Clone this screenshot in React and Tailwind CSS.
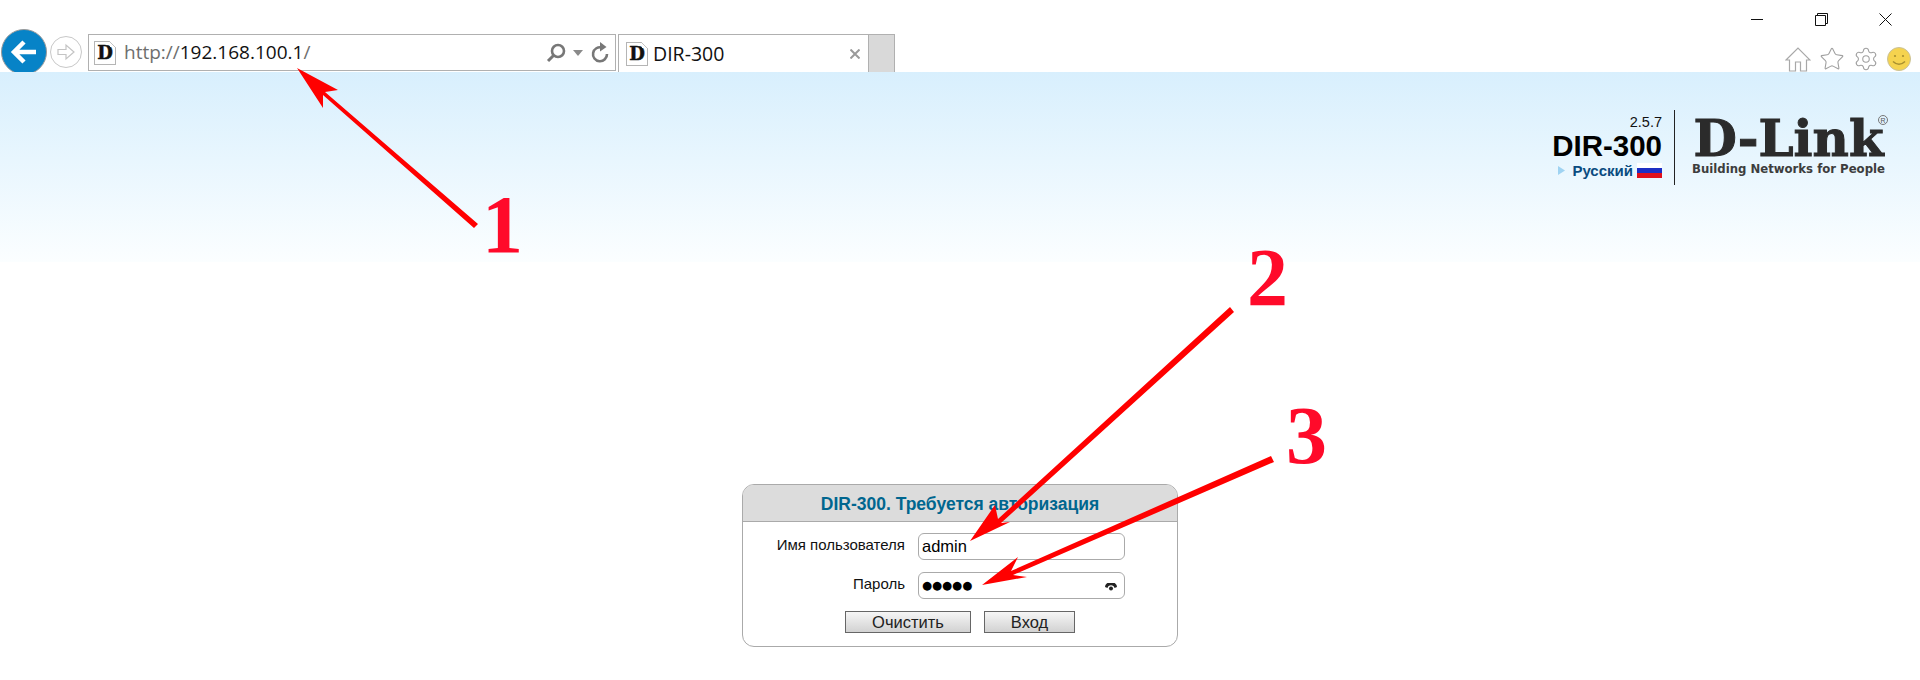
import React from 'react';
import { Settings, Star } from 'lucide-react';

// Small document favicon with the D-Link "D" on it
const Favicon = () => (
    <div className="relative flex h-[24px] w-[22px] shrink-0 items-center justify-center border border-[#b5b5b5] bg-white">
        <span className="font-['DejaVu_Serif'] text-[18px] font-bold leading-none text-[#111] [-webkit-text-stroke:0.5px_#111]">D</span>
        <div className="absolute -right-px -top-px h-[6px] w-[6px] bg-white" />
        <svg className="absolute -right-px -top-px" width="7" height="7" viewBox="0 0 7 7">
            <path d="M0.5 0.5 L6.5 6.5" stroke="#c4c4c4" fill="none" />
        </svg>
    </div>
);

const BackButton = () => (
    <div className="flex h-[46px] w-[46px] items-center justify-center rounded-full border border-[#9a9a9a] bg-[#0783c7]">
        <svg width="28" height="26" viewBox="0 0 28 26">
            <path d="M26 13 H5 M14 3 L4 13 L14 23" stroke="#fff" strokeWidth="4.5" fill="none" />
        </svg>
    </div>
);

const ForwardButton = () => (
    <div className="flex h-[32px] w-[32px] items-center justify-center rounded-full border border-[#c8c8c8] bg-white">
        <svg width="20" height="18" viewBox="0 0 20 18">
            <path d="M2 6.5 H10 V2 L18 9 L10 16 V11.5 H2 Z" stroke="#c4c4c4" strokeWidth="1.2" fill="none" />
        </svg>
    </div>
);

const AddressBar = () => (
    <div className="flex h-[37px] w-[528px] items-center border border-[#b0b0b0] bg-white pl-[5px] pr-[6px]">
        <Favicon />
        <div className="ml-[8px] flex-1 font-['Open_Sans'] text-[19px] leading-none text-[#111]">
            <span className="text-[#6e6e6e]">http://</span>192.168.100.1<span className="text-[#6e6e6e]">/</span>
        </div>
        <svg width="20" height="20" viewBox="0 0 20 20">
            <circle cx="12" cy="8" r="6" stroke="#777" strokeWidth="2.6" fill="none" />
            <path d="M7.5 12.5 L2 18" stroke="#777" strokeWidth="3" />
        </svg>
        <svg className="ml-[7px]" width="10" height="6" viewBox="0 0 10 6">
            <path d="M0 0 H10 L5 6 Z" fill="#8a8a8a" />
        </svg>
        <svg className="ml-[8px]" width="18" height="22" viewBox="0 0 18 22">
            <path d="M11 5.5 A7 7 0 1 0 16 12" stroke="#777" strokeWidth="2.6" fill="none" />
            <path d="M9 0 L15.5 5 L9 9.5 Z" fill="#777" />
        </svg>
    </div>
);

const Tab = () => (
    <div className="ml-[2px] flex h-[38px] border border-b-0 border-[#b0b0b0]">
        <div className="flex w-[249px] items-center bg-white pl-[7px] pr-[8px]">
            <Favicon />
            <span className="ml-[5px] flex-1 font-['Open_Sans'] text-[19.5px] leading-none text-[#111]">DIR-300</span>
            <svg width="10" height="10" viewBox="0 0 10 10">
                <path d="M0.5 0.5 L9.5 9.5 M9.5 0.5 L0.5 9.5" stroke="#9a9a9a" strokeWidth="2" />
            </svg>
        </div>
        <div className="w-[26px] border-l border-[#b0b0b0] bg-[#d9d9d9]" />
    </div>
);

const WindowControls = () => (
    <div className="flex items-center justify-end gap-[51px] pr-[28px]">
        <svg width="13" height="13" viewBox="0 0 13 13">
            <path d="M0 6.5 H12" stroke="#111" />
        </svg>
        <svg width="13" height="13" viewBox="0 0 13 13">
            <path d="M2.5 2.5 V0.5 H12.5 V10.5 H10.5 M0.5 2.5 H10.5 V12.5 H0.5 Z" stroke="#111" fill="none" />
        </svg>
        <svg width="13" height="13" viewBox="0 0 13 13">
            <path d="M0.5 0.5 L12.5 12.5 M12.5 0.5 L0.5 12.5" stroke="#111" />
        </svg>
    </div>
);

const ToolIcons = () => (
    <div className="flex items-center gap-[8px] pr-[9px]">
        <svg width="26" height="25" viewBox="0 0 26 25">
            <path d="M1 13 L13 1 L25 13 H21.5 V24 H15.5 V15 H10.5 V24 H4.5 V13 Z" stroke="#a8a8a8" strokeWidth="1.2" fill="none" />
        </svg>
        <Star size={26} strokeWidth={1} color="#a0a0a0" />
        <Settings size={26} strokeWidth={1} color="#a0a0a0" />
        <svg width="24" height="24" viewBox="0 0 24 24">
            <circle cx="12" cy="12" r="11.5" fill="#f5d34f" stroke="#c9c19a" />
            <circle cx="8" cy="9" r="1.1" fill="#a89030" />
            <circle cx="16" cy="9" r="1.1" fill="#a89030" />
            <path d="M6 14.5 Q12 20 18 14.5" stroke="#a89030" strokeWidth="1.6" fill="none" />
        </svg>
    </div>
);

const Toolbar = () => (
    <div className="flex h-[72px] justify-between overflow-hidden bg-white">
        <div className="flex items-start pl-[1px] pt-[29px]">
            <BackButton />
            <div className="ml-[3px] mt-[7px]">
                <ForwardButton />
            </div>
            <div className="ml-[6px] mt-[5px] flex">
                <AddressBar />
                <Tab />
            </div>
        </div>
        <div className="flex flex-col items-end gap-[20px] pt-[13px]">
            <WindowControls />
            <ToolIcons />
        </div>
    </div>
);

const Logo = () => (
    <div className="mt-[38px] flex h-[75px] items-stretch pr-[34px] font-['Liberation_Sans']">
        <div className="flex flex-col items-end pr-[12px] pt-[4px]">
            <div className="text-[14.5px] leading-[17px] text-[#111]">2.5.7</div>
            <div className="text-[29.5px] font-bold leading-[29px] text-black">DIR-300</div>
            <div className="mt-[3px] flex items-center">
                <svg width="7" height="9" viewBox="0 0 7 9">
                    <path d="M0 0 L7 4.5 L0 9 Z" fill="#9fd3f2" />
                </svg>
                <span className="ml-[7px] text-[15px] font-bold leading-none text-[#0b4c80]">Русский</span>
                <div className="ml-[4px] flex h-[15px] w-[25px] flex-col">
                    <div className="flex-1 bg-white" />
                    <div className="flex-1 bg-[#1c2fc4]" />
                    <div className="flex-1 bg-[#e0101c]" />
                </div>
            </div>
        </div>
        <div className="w-px bg-[#222]" />
        <div className="relative ml-[16px] flex w-[195px] flex-col items-center pt-[7px]">
            <div className="font-['DejaVu_Serif'] text-[50px] font-bold leading-[44px] text-[#2b2b2b] [-webkit-text-stroke:1px_#2b2b2b]">D-Link</div>
            <div className="whitespace-nowrap font-['DejaVu_Sans'] text-[13px] font-bold leading-[15px] text-[#3d3d3d] [font-stretch:condensed]">Building Networks for People</div>
            <div className="absolute -right-[2px] top-[5px] flex h-[10px] w-[10px] items-center justify-center rounded-full border border-[#777] text-[7px] leading-none text-[#555]">R</div>
        </div>
    </div>
);

const Field = ({ label, children }) => (
    <div className="flex items-center">
        <label className="w-[175px] pb-[4px] pr-[13px] text-right text-[15px] leading-none text-[#111]">{label}</label>
        <div className="relative flex h-[27px] w-[207px] items-center rounded-[6px] border border-[#aaa] bg-white px-[3px]">
            {children}
        </div>
    </div>
);

const FormButton = ({ children, className }) => (
    <button className={`h-[22px] border border-[#666] bg-gradient-to-b from-[#f6f6f6] to-[#d2d2d2] text-[16.5px] leading-none text-[#222] ${className}`}>
        {children}
    </button>
);

const LoginForm = () => (
    <div className="h-[163px] w-[436px] overflow-hidden rounded-[12px] border border-[#aaa] bg-white font-['Liberation_Sans']">
        <div className="flex h-[37px] items-center justify-center border-b border-[#aaa] bg-[#dcdcdc] pt-[3px] text-[17.5px] font-bold text-[#00668f]">
            DIR-300. Требуется авторизация
        </div>
        <div className="flex flex-col gap-[12px] pt-[11px]">
            <Field label="Имя пользователя">
                <span className="text-[16.5px] leading-none text-black">admin</span>
            </Field>
            <Field label="Пароль">
                <span className="font-['DejaVu_Sans'] text-[11.5px] leading-none text-black">●●●●●</span>
                <svg className="absolute right-[7px] top-[10px]" width="12" height="8" viewBox="0 0 12 8">
                    <path d="M0 4 A6 5 0 0 1 12 4 L9.5 5 A3.6 3.6 0 0 0 2.5 5 Z" fill="#222" />
                    <circle cx="6" cy="5.5" r="2" fill="#222" />
                </svg>
            </Field>
        </div>
        <div className="flex justify-center gap-[13px] pt-[12px]">
            <FormButton className="w-[126px]">Очистить</FormButton>
            <FormButton className="w-[91px]">Вход</FormButton>
        </div>
    </div>
);

// Red annotations painted over the screenshot
const Annotations = () => (
    <>
        <svg className="pointer-events-none absolute left-0 top-0" width="1920" height="680" viewBox="0 0 1920 680">
            <g fill="#ff0000" stroke="none">
                <path d="M297 68 L338 90 L325 92 L478 224 L474 228 L323 95 L323 108 Z" />
                <path d="M970 541 L995 505 L998 519 L1230 307 L1234 312 L1001 523 L1010 522 Z" />
                <path d="M982 585 L1018 557 L1011 571 L1271 456 L1274 462 L1013 575 L1027 577 Z" />
            </g>
        </svg>
        <span className="absolute left-[482px] top-[184px] font-['Liberation_Serif'] text-[82px] font-bold leading-[82px] text-[#ff0a2a]">1</span>
        <span className="absolute left-[1247px] top-[237px] font-['Liberation_Serif'] text-[82px] font-bold leading-[82px] text-[#ff0a2a]">2</span>
        <span className="absolute left-[1286px] top-[395px] font-['Liberation_Serif'] text-[82px] font-bold leading-[82px] text-[#ff0a2a]">3</span>
    </>
);

export default function App() {
    return (
        <div className="relative h-[680px] w-full overflow-hidden bg-white">
            <Toolbar />
            <div className="flex h-[190px] justify-end bg-gradient-to-b from-[#d8effd] to-[#fbfeff]">
                <Logo />
            </div>
            <div className="flex justify-center pt-[222px]">
                <LoginForm />
            </div>
            <Annotations />
        </div>
    );
}
